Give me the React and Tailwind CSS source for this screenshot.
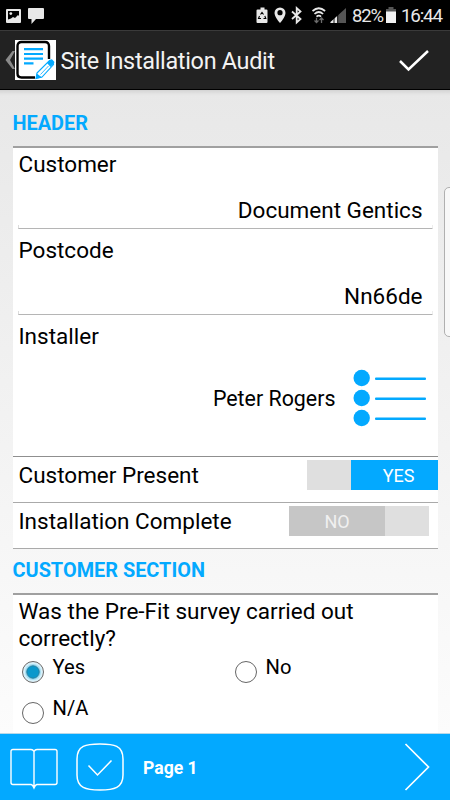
function StatusBar() {
  return (
    <div className="flex h-[30px] items-center bg-black pl-1.5 pr-[7px] text-[#e8e8e8]">
      <svg width="15" height="14" viewBox="0 0 15 14" className="mt-px">
        <rect width="15" height="14" rx="1" fill="#e8e8e8" />
        <path d="M2 2h11v5l-1-1-3 3-2-1-2 1.500-3 1z" fill="#000" />
        <circle cx="4.800" cy="4.600" r="1.400" fill="#e8e8e8" />
      </svg>
      <svg width="16" height="16" viewBox="0 0 16 16" className="ml-[7px] mt-0.5">
        <path d="M1 0h14q1 0 1 1v9q0 1-1 1H8l-4.500 5V11H1q-1 0-1-1V1q0-1 1-1z" fill="#e8e8e8" />
      </svg>
      <div className="ml-auto flex items-center">
        <svg width="95" height="20" viewBox="0 0 95 20">
          <path d="M1.500 4.500h3V2.500h4v2h2q1 0 1 1V17q0 1-1 1h-9q-1 0-1-1V5.500q0-1 1-1z" fill="#e8e8e8" />
          <path d="M4.500 9.500 6 7.500l1.500 2M8.800 11l1 2.500H7.500M5 13.500H2.500l1-2.500" fill="none" stroke="#000" strokeWidth="1.100" />
          <path d="M24 2.500A5.500 5.500 0 0 1 29.500 8c0 4-5.500 10-5.500 10S18.500 12 18.500 8A5.500 5.500 0 0 1 24 2.500z" fill="#e8e8e8" />
          <circle cx="24" cy="7.700" r="2.600" fill="#000" />
          <path d="M36 6.500l8.500 7.500-3.800 3.500V3l3.800 3.500L36 14" fill="none" stroke="#e8e8e8" strokeWidth="1.800" />
          <path d="M56.500 6q6.300-5.500 12.600 0M58.500 9q4.300-4 8.600 0M60.500 11.700q2.300-2 4.600 0" fill="none" stroke="#e8e8e8" strokeWidth="1.700" />
          <path d="M60.500 12.700v5M58.500 15.500l2 2 2-2M65.500 18v-5M63.500 15l2-2 2 2" fill="none" stroke="#6c6c6c" strokeWidth="1.300" />
          <path d="M74.500 18v-1L90 3v15z" fill="#555" />
          <path d="M74.500 18v-1l7-6.300V18z" fill="#e8e8e8" />
          <path d="M78 9v9M81.700 6v12" stroke="#000" strokeWidth=".9" />
        </svg>
        <span className="ml-px w-[31px] whitespace-nowrap pt-px text-[18.500px] leading-[30px] tracking-[-1.200px]">82%</span>
        <svg width="10" height="16" viewBox="0 0 10 16" className="ml-[3px]">
          <path d="M0 2h2.500V0h5v2H10v3H0z" fill="#555" />
          <path d="M0 4.500h10V16H0z" fill="#f2f2f2" />
        </svg>
        <span className="ml-[5px] w-[42px] whitespace-nowrap pt-px text-[18.800px] leading-[30px] tracking-[-1.200px]">16:44</span>
      </div>
    </div>
  );
}

function TitleBar() {
  return (
    <div className="flex h-[60px] items-center border-b border-t border-b-black border-t-[#3a3a3a] bg-[#222] pt-px">
      <svg width="10" height="18" viewBox="0 0 10 18" className="ml-[5px] -mt-0.5">
        <path d="M7.500 0H10L5 9l5 9H7.500L.5 9z" fill="#8a8a8a" />
      </svg>
      <svg width="41" height="40" viewBox="0 0 41 40" className="-mt-px">
        <rect width="41" height="40" fill="#fff" />
        <path d="M34 19V6q0-4-4-4H6.500q-4 0-4 4v27.500q0 4 4 4H20" fill="none" stroke="#000" strokeWidth="2.400" />
        <path d="M9 9.200h19M9 14h19M9 18.700h19M9 23.400h9.500" stroke="#03a9ff" strokeWidth="2.200" />
        <path d="M22 33 34.500 20.500l4 4L27 37l-6 1.500z" fill="#fff" stroke="#03a9ff" strokeWidth="1.100" />
        <path d="M32 23l3.500-3.500q1-.6 2 .3l1.500 1.700q.8 1 0 2L35.500 27z" fill="#03a9ff" />
        <path d="M21.800 33.500 27 37.500l-6.200 1.300z" fill="#03a9ff" />
        <path d="M25.500 34.500l8-8.500" stroke="#03a9ff" strokeWidth=".8" />
      </svg>
      <h1 className="ml-[4.500px] text-[23.400px] leading-[30px] tracking-[-0.300px] text-[#f3f3f3]">Site Installation Audit</h1>
      <svg width="32" height="24" viewBox="0 0 32 24" className="ml-auto mr-5">
        <path d="M2 12l8.500 8.500L30 2" fill="none" stroke="#fff" strokeWidth="2.500" />
      </svg>
    </div>
  );
}

function TextField({ label, value, className }) {
  return (
    <div className={`flex flex-col justify-between ${className}`}>
      <div className="pl-1.5 leading-[26px]">{label}</div>
      <div>
        <div className="pr-[15px] text-right leading-[26px]">{value}</div>
        <div className="mx-[5px] h-1.5 border-x border-b border-b-[#b5b5b5] border-x-[#dcdcdc] [clip-path:inset(2px_0_0_0)]" />
      </div>
    </div>
  );
}

function ListIcon() {
  return (
    <svg width="73" height="58" viewBox="0 0 73 58">
      {[9, 29, 49].map((y) => (
        <g key={y}>
          <circle cx="8.700" cy={y} r="8.200" fill="#03a9ff" />
          <rect x="22" y={y - 0.4} width="51" height="2.400" rx="1" fill="#03a9ff" />
        </g>
      ))}
    </svg>
  );
}

function Radio({ label, checked }) {
  return (
    <div className="flex">
      <svg width="24" height="24" viewBox="0 0 24 24" className="mt-[5px]">
        {checked && <circle cx="12" cy="12" r="10" fill="#d5f0fa" />}
        {checked && <circle cx="12" cy="12" r="8" fill="#a5dcf0" />}
        <circle cx="12" cy="12" r="10.500" fill="none" stroke="#666" />
        {checked && <circle cx="12" cy="12" r="6.200" fill="#0a98cc" stroke="#27809f" />}
      </svg>
      <span className="ml-2 text-[20.200px] leading-[24px]">{label}</span>
    </div>
  );
}

function BottomBar() {
  return (
    <div className="flex h-[67px] items-center border-t border-[#b8d8e8] bg-[#03a9ff] text-white">
      <svg width="48" height="42" viewBox="0 0 48 42" className="ml-[9.500px] mt-[3px]" fill="none" stroke="#fff" strokeWidth="1.400">
        <path d="M24 3.500Q23 1.500 21 1.500H3Q1 1.500 1 3.500v31q0 2 2 2h18q1.500 0 3 3.500 1.500-3.500 3-3.500h18q2 0 2-2v-31q0-2-2-2H27q-2 0-3 2zM24 3.500V39" />
      </svg>
      <svg width="48" height="48" viewBox="0 0 48 48" className="-mt-px ml-[18.500px]" fill="none" stroke="#fff" strokeWidth="1.500">
        <path d="M24 1C38 1 47 2.500 47 16v16c0 13-9 15-23 15S1 45 1 32V16C1 2.500 10 1 24 1z" />
        <path d="M12.500 22.500 21.500 32 35.500 17.500" />
      </svg>
      <span className="ml-[19px] pt-px text-[17.600px] font-bold leading-6">Page 1</span>
      <svg width="26" height="48" viewBox="0 0 26 48" className="-mt-px ml-auto mr-5" fill="none" stroke="#fff" strokeWidth="1.700">
        <path d="M1.500 1 24.500 24 1.500 47" />
      </svg>
    </div>
  );
}

function App() {
  return (
    <div className="relative flex h-[800px] w-[450px] flex-col overflow-hidden font-[Roboto,sans-serif] text-black">
      <StatusBar />
      <TitleBar />

      <main className="h-[643px] bg-linear-to-b from-[#e8e8e8] to-[#fcfcfc] px-[12.500px] text-[22.500px] shadow-[inset_0_7px_4px_-5px_#cfcfcf]">
        <h2 className="h-14 pt-[21px] text-[19.900px] font-bold leading-[26px] text-[#03a9ff]">HEADER</h2>
        <section className="h-[403px] border-b border-[#aaa] border-t-2 border-t-[#a0a0a0] bg-white">
          <TextField label="Customer" value="Document Gentics" className="h-[81px] pt-[3px]" />
          <TextField label="Postcode" value="Nn66de" className="h-[86px] pt-2" />
          <div className="h-[141px] pl-1.5 pr-3 pt-2">
            <div className="leading-[26px]">Installer</div>
            <div className="mt-5 flex items-center justify-end gap-[17px]">
              <span className="pt-0.5 text-[21.400px]">Peter Rogers</span>
              <ListIcon />
            </div>
          </div>
          <div className="flex h-[46px] justify-between border-t border-[#8f8f8f] pl-1.5">
            <span className="pt-[5px] leading-[26px]">Customer Present</span>
            <div className="mt-[3px] flex h-[30px] w-[131px] bg-[#dfdfdf] text-[18px] leading-[31px] text-white">
              <span className="ml-auto w-[87px] bg-[#03a9ff] pl-[9px] text-center">YES</span>
            </div>
          </div>
          <div className="flex h-[46px] justify-between border-t border-[#aaa] pl-1.5 pr-[9px]">
            <span className="pt-[5px] leading-[26px]">Installation Complete</span>
            <div className="mt-[3px] flex h-[30px] w-[140px] bg-[#dfdfdf] text-[18px] leading-[31px] text-[#f0f0f0]">
              <span className="w-24 bg-[#c6c6c6] pl-px text-center">NO</span>
            </div>
          </div>
        </section>

        <h2 className="h-11 pt-[9px] text-[19.900px] font-bold leading-[26px] text-[#03a9ff]">CUSTOMER SECTION</h2>
        <section className="h-[140px] border-t-2 border-[#a0a0a0] bg-white pl-1.5">
          <p className="pt-[3px] leading-[26.500px]">
            Was the Pre-Fit survey carried out
            <br />
            correctly?
          </p>
          <div className="ml-[2px] mt-[4px] grid grid-cols-[213px_1fr] gap-y-[12px]">
            <Radio label="Yes" checked />
            <Radio label="No" />
            <Radio label="N/A" />
          </div>
        </section>
      </main>

      <BottomBar />
      <div className="absolute -right-1 top-[187px] h-[150px] w-2.5 rounded-l-[5px] border border-[#b0b0b0] bg-[#f8f8f8]" />
    </div>
  );
}

export default App;
